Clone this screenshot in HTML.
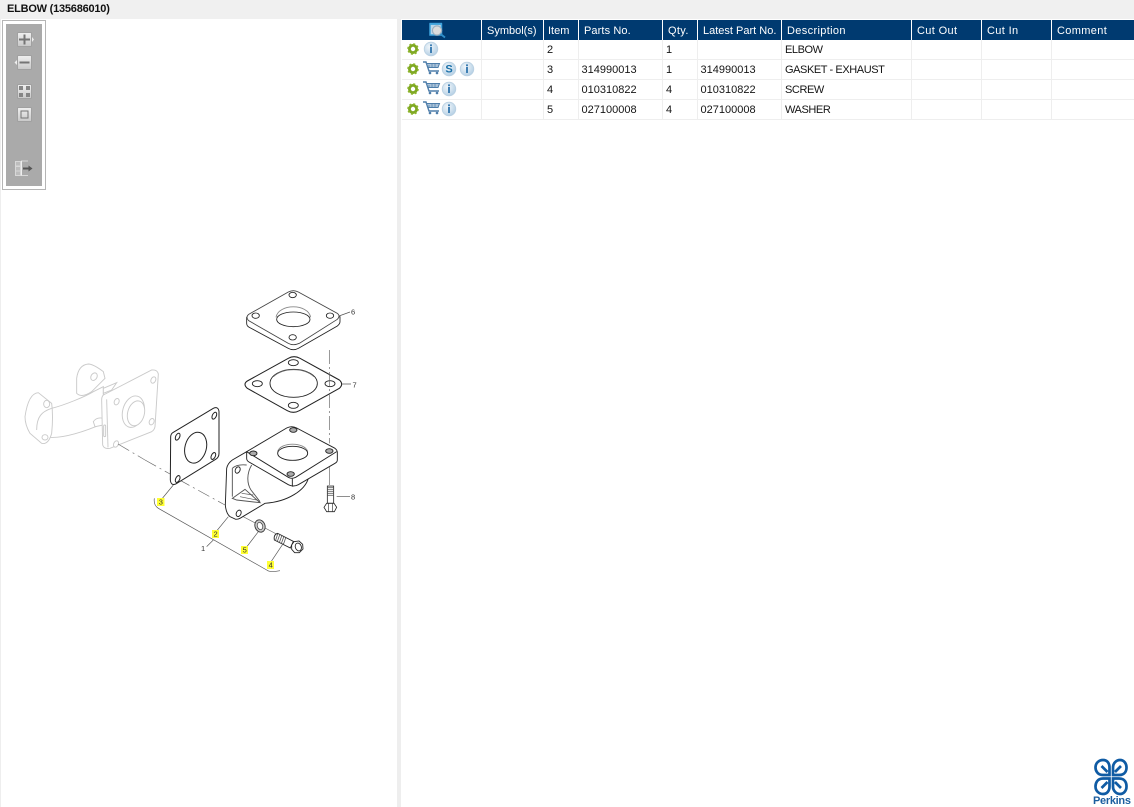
<!DOCTYPE html>
<html><head><meta charset="utf-8"><title>ELBOW (135686010)</title>
<style>
html,body{margin:0;padding:0;background:#fff;width:1134px;height:807px;overflow:hidden}
body{position:relative;font-family:"Liberation Sans",sans-serif;font-size:11px;color:#111}
#top{position:absolute;left:0;top:0;width:1134px;height:19px;background:#f0f0f0}
#title{position:absolute;left:7px;top:2px;font-weight:bold;font-size:11px;letter-spacing:-.22px;line-height:14px;color:#111}
#split{position:absolute;left:397px;top:19px;width:4px;height:788px;background:#eeeeee}
#edge{position:absolute;left:0;top:19px;width:1px;height:788px;background:#eee}
#tb{position:absolute;left:2px;top:20px;width:42px;height:168px;border:1px solid #b5b5b5;background:#fff}
#tb i{position:absolute;left:3px;top:3px;width:36px;height:162px;background:#aaa}
table{position:absolute;left:402px;top:20px;border-collapse:separate;border-spacing:0;table-layout:fixed;width:732px}
th{background:#003a70;color:#fff;font-weight:normal;text-align:left;height:20px;padding:1px 0 0 5px;box-sizing:border-box;border-right:1px solid #fff;font-size:11px;letter-spacing:.35px;white-space:nowrap;overflow:hidden}
td{height:20px;box-sizing:border-box;padding:1px 0 0 3px;border-right:1px solid #eee;border-bottom:1px solid #eee;font-size:11px;white-space:nowrap;overflow:hidden;color:#151515}
td.d{letter-spacing:-.42px}
td.n{padding-left:2.5px}
td:last-child,th:last-child{border-right:0}
svg{position:absolute;left:0;top:0}
</style></head><body>
<div id="top"></div><div id="title">ELBOW (135686010)</div>
<div id="edge"></div><div id="split"></div>
<div id="tb"><i></i></div>
<table>
<colgroup><col style="width:80px"><col style="width:62px"><col style="width:35px"><col style="width:84px"><col style="width:35px"><col style="width:84px"><col style="width:130px"><col style="width:70px"><col style="width:70px"><col style="width:82px"></colgroup>
<tr><th></th><th style="letter-spacing:0">Symbol(s)</th><th style="letter-spacing:0;padding-left:4px">Item</th><th style="letter-spacing:.1px">Parts No.</th><th>Qty.</th><th style="letter-spacing:0">Latest Part No.</th><th>Description</th><th>Cut Out</th><th>Cut In</th><th>Comment</th></tr>
<tr><td></td><td></td><td>2</td><td></td><td>1</td><td></td><td class="d">ELBOW</td><td></td><td></td><td></td></tr>
<tr><td></td><td></td><td>3</td><td class="n">314990013</td><td>1</td><td class="n">314990013</td><td class="d">GASKET - EXHAUST</td><td></td><td></td><td></td></tr>
<tr><td></td><td></td><td>4</td><td class="n">010310822</td><td>4</td><td class="n">010310822</td><td class="d">SCREW</td><td></td><td></td><td></td></tr>
<tr><td></td><td></td><td>5</td><td class="n">027100008</td><td>4</td><td class="n">027100008</td><td class="d">WASHER</td><td></td><td></td><td></td></tr>
</table>

<svg width="1134" height="807" viewBox="0 0 1134 807" fill="none">
<defs>
<radialGradient id="ig" cx=".4" cy=".35" r=".8"><stop offset="0" stop-color="#f2f7fb"/><stop offset="1" stop-color="#a9c8e0"/></radialGradient>
<linearGradient id="bg" x1="0" y1="0" x2="0" y2="1"><stop offset="0" stop-color="#f0f0f0"/><stop offset="1" stop-color="#c8c8c8"/></linearGradient>
<g id="gear"><circle r="3.6" fill="none" stroke="#7fa823" stroke-width="2.8"/><circle r="5" fill="none" stroke="#8db52c" stroke-width="1.6" stroke-dasharray="2 1.93"/></g>
<g id="info"><circle r="6.8" fill="url(#ig)" stroke="#b9d0e2" stroke-width=".8"/><rect x="-1" y="-2" width="2" height="6" fill="#3f7fb3"/><rect x="-1" y="-4.6" width="2" height="1.8" fill="#3f7fb3"/></g>
<g id="cart" stroke="#4f7eaa" fill="none"><path d="M-8-6h3l3 9h10" stroke-width="1.4"/><path d="M-4.500-4.500H8.500L7-.5H-3z" fill="#a9c2d9" stroke-width="1"/><path d="M-2-3V0M1-4V0M4-4V0" stroke-width=".7"/><circle cx="-1" cy="5" r="1.300" fill="#4f7eaa" stroke="none"/><circle cx="6" cy="5" r="1.300" fill="#4f7eaa" stroke="none"/></g>
</defs>

<!-- toolbar buttons -->
<g stroke="#a0a0a0" fill="url(#bg)">
<rect x="17.500" y="32.500" width="14" height="14" rx="1"/><rect x="17.500" y="55.500" width="14" height="14" rx="1"/><rect x="17.500" y="84.500" width="14" height="14" rx="1"/><rect x="17.500" y="107.500" width="14" height="14" rx="1"/>
</g>
<path d="M32 37l2 2.500-2 2.500z" fill="#eee"/><path d="M17 60l-2.500 2.500 2.500 2.500z" fill="#eee"/>
<path d="M19 39.500h11M24.500 34.500v10" stroke="#757575" stroke-width="2"/>
<path d="M19.500 62.500h10" stroke="#757575" stroke-width="2"/>
<g fill="#858585"><rect x="19" y="86" width="4" height="4"/><rect x="26" y="86" width="4" height="4"/><rect x="19" y="93" width="4" height="4"/><rect x="26" y="93" width="4" height="4"/></g>
<rect x="21" y="111" width="7" height="7" stroke="#757575" stroke-width="1"/>
<g stroke="#d8d8d8" fill="#bdbdbd"><rect x="15.500" y="161.500" width="5" height="4.500"/><rect x="15.500" y="166.500" width="5" height="4.500"/><rect x="15.500" y="171" width="5" height="4.500"/></g>
<path d="M21 161h7M21 175.500h7" stroke="#d8d8d8"/><path d="M21.500 161v14.500" stroke="#eee"/>
<path d="M23 168.500h6" stroke="#555" stroke-width="2"/><path d="M28.500 165.500l4 3-4 3z" fill="#555"/>

<!-- header search icon -->
<rect x="430" y="24" width="11.500" height="11" fill="#bcd9ec" stroke="#3fa3dc" stroke-width="1.500"/>
<path d="M429.500 23.800h12.500" stroke="#3fa3dc" stroke-width="2"/>
<circle cx="437" cy="30.500" r="4.600" fill="#dcdcdc" stroke="#9fb0bf" stroke-width="1.200"/>
<path d="M440.500 34l4.500 3.500" stroke="#2f8fca" stroke-width="1.800"/>

<!-- row icons -->
<use href="#gear" x="413" y="49"/><use href="#info" x="431" y="49"/>
<use href="#gear" x="413" y="69"/><use href="#cart" x="431" y="68"/>
<circle cx="449" cy="69" r="6.800" fill="url(#ig)" stroke="#b9d0e2" stroke-width=".8"/>
<text x="449" y="72.700" text-anchor="middle" font-family="Liberation Sans" font-weight="bold" font-size="11" fill="#1a70a8">S</text>
<use href="#info" x="467" y="69"/>
<use href="#gear" x="413" y="89"/><use href="#cart" x="431" y="88"/><use href="#info" x="449" y="89"/>
<use href="#gear" x="413" y="109"/><use href="#cart" x="431" y="108"/><use href="#info" x="449" y="109"/>

<!-- faded elbow, traced in 3x coordinates -->
<g transform="translate(10 350) scale(.33333)" stroke="#cacaca" stroke-width="2.800" fill="#fff">
<path d="M200 85Q205 45 235 42Q250 42 280 65L285 85L245 125Q215 145 200 130Z"/>
<ellipse cx="252" cy="80" rx="9" ry="12" transform="rotate(30 252 80)"/>
<path d="M125 175C165 165 225 140 250 125L280 110V220C225 245 160 265 120 262L80 240C80 200 95 185 125 175Z"/>
<path d="M45 200Q55 130 85 128L125 160Q130 200 125 250Q115 285 95 280L60 250Q45 225 45 200Z"/>
<ellipse cx="110" cy="162" rx="9" ry="11"/><ellipse cx="105" cy="262" rx="9" ry="8"/>
<path d="M80 240C80 200 95 185 125 175" fill="none"/>
<path d="M250 215Q260 200 280 205V225L255 230Z"/>
<path d="M280 115L320 98L305 120L280 130Z"/>
<path d="M280 135L425 60Q442 58 445 72L435 230Q433 240 425 245L300 295Q282 298 278 285L275 150Q275 140 280 135Z"/>
<path d="M290 148L294 292" fill="none"/>
<ellipse cx="370" cy="185" rx="32" ry="48" transform="rotate(15 370 185)"/>
<ellipse cx="378" cy="190" rx="25" ry="38" transform="rotate(15 378 190)"/>
<ellipse cx="430" cy="90" rx="7" ry="10" transform="rotate(25 430 90)"/><ellipse cx="320" cy="155" rx="7" ry="10" transform="rotate(25 320 155)"/><ellipse cx="425" cy="215" rx="7" ry="10" transform="rotate(25 425 215)"/><ellipse cx="318" cy="282" rx="7" ry="10" transform="rotate(25 318 282)"/>
<rect x="281" y="225" width="6" height="35" rx="3"/>
</g>

<!-- plates 6 and 7 -->
<g transform="translate(220 280) scale(.33333)" stroke="#222" stroke-width="2.600" fill="#fff">
<path d="M80 112V130Q80 138 88 142L205 205Q220 213 235 205L352 138Q360 132 360 125V110Z"/>
<path d="M86 103L205 36Q220 28 235 36L352 100Q362 108 352 118L238 190Q220 198 205 190L86 122Q76 112 86 103Z" stroke="#444"/>
<path d="M168 112C175 70 265 70 272 112" stroke="#888"/>
<ellipse cx="220" cy="118" rx="50" ry="22"/>
<ellipse cx="218" cy="45" rx="11" ry="8"/><ellipse cx="107" cy="107" rx="11" ry="8"/><ellipse cx="330" cy="107" rx="11" ry="8"/><ellipse cx="218" cy="172" rx="11" ry="8"/>
<path d="M82 303L205 235Q222 225 240 235L358 300Q372 312 358 325L238 392Q220 402 202 392L82 325Q68 312 82 303Z" stroke-width="3.200"/>
<ellipse cx="221" cy="310" rx="71" ry="42"/>
<path d="M160 290C190 262 252 262 282 290" fill="none" stroke="#666"/>
<ellipse cx="220" cy="248" rx="15" ry="9"/><ellipse cx="112" cy="311" rx="15" ry="9"/><ellipse cx="330" cy="311" rx="15" ry="9"/><ellipse cx="220" cy="376" rx="15" ry="9"/>
</g>

<!-- dashed centre line from the faded flange to the gasket -->
<path d="M118 444L145 460" stroke="#777" stroke-width=".7" stroke-dasharray="13 4 2 4"/>

<!-- assembly, traced in 3x coordinates -->
<g transform="translate(145 400) scale(.33333)" fill="none">
<g stroke="#666" stroke-width="2">
<path d="M0 180L75 222" stroke-dasharray="38 12 6 12"/>
<path d="M100 238L240 315" stroke-dasharray="38 12 6 12"/>
<path d="M285 345L400 405"/>
<path d="M553 -150V130" stroke-dasharray="42 9 6 9"/><path d="M553 160V255"/>
</g>
<g stroke="#222" stroke-width="3" fill="#fff">
<path d="M85 97L205 25Q220 18 222 35L222 160Q222 172 212 178L92 252Q78 258 76 240L77 110Q78 100 85 97Z"/>
<ellipse cx="152" cy="143" rx="32" ry="47" transform="rotate(15 152 143)"/>
<ellipse cx="208" cy="47" rx="6" ry="11" transform="rotate(25 208 47)"/><ellipse cx="98" cy="110" rx="6" ry="11" transform="rotate(25 98 110)"/><ellipse cx="205" cy="168" rx="6" ry="11" transform="rotate(25 205 168)"/><ellipse cx="98" cy="237" rx="6" ry="11" transform="rotate(25 98 237)"/>
</g>
<g stroke="#222" stroke-width="2.800" fill="#fff">
<path d="M305 155L262 180Q248 190 245 205L241 315Q243 340 255 350L272 358Q280 358 285 355L360 310C430 305 480 270 490 235L305 155Z"/>
<path d="M262 205V290M262 205Q275 192 305 195" fill="none" stroke="#555"/>
<path d="M262 295L300 268L345 308L275 300Z" stroke="#555"/>
<path d="M320 195C305 220 305 250 318 270L345 305" fill="none" stroke="#555"/>
<path d="M290 280L325 285M285 290L335 300" stroke="#555" stroke-width="2"/>
<ellipse cx="278" cy="210" rx="7" ry="10" transform="rotate(25 278 210)"/>
<ellipse cx="281" cy="340" rx="7" ry="10" transform="rotate(25 281 340)"/>
<path d="M305 155L425 84Q440 76 455 84L570 145Q577 150 577 158V180Q577 186 570 190L460 254Q445 262 430 254L312 186Q305 182 305 175Z"/>
<path d="M305 155L430 232Q440 238 452 232L575 155" fill="none"/>
<path d="M442 236V260" fill="none"/>
<path d="M398 155C405 125 480 125 488 155" stroke="#888"/>
<ellipse cx="443" cy="160" rx="45" ry="21"/>
<ellipse cx="445" cy="90" rx="11" ry="7" fill="#aaa"/><ellipse cx="325" cy="160" rx="11" ry="7" fill="#aaa"/><ellipse cx="553" cy="153" rx="11" ry="7" fill="#aaa"/><ellipse cx="437" cy="222" rx="11" ry="7" fill="#aaa"/>
</g>
<!-- bolt 8 -->
<g stroke="#222" stroke-width="2.400" fill="#fff">
<path d="M547 258H566V310H547Z"/>
<path d="M548 262H565M548 268H565M548 274H565M548 280H565M548 286H565" stroke="#666"/>
<path d="M537 322L545 310H567L575 322L568 335H545Z"/>
<path d="M550 311V334M563 311V334" stroke-width="1.800"/>
</g>
<!-- washer 5 -->
<ellipse cx="345" cy="378" rx="15" ry="19" fill="#c8c8c8" stroke="#333" stroke-width="2.600" transform="rotate(-20 345 378)"/>
<ellipse cx="345" cy="378" rx="8" ry="11" fill="#fff" stroke="#333" stroke-width="2" transform="rotate(-20 345 378)"/>
<!-- bolt 4 -->
<g stroke="#222" stroke-width="2.600" fill="#fff">
<path d="M398 400L445 424L436 444L388 420Q385 404 398 400Z"/>
<path d="M398 402L392 420M404 405L397 424M410 408L403 428M416 411L409 431M422 414L415 434" stroke="#555" stroke-width="2.400"/>
<path d="M440 435L447 425L462 423L473 433L474 447L463 458L449 458L440 448Z"/>
<ellipse cx="460" cy="441" rx="9" ry="12" transform="rotate(-20 460 441)"/>
</g>
<!-- callouts -->
<g stroke="#555" stroke-width="2">
<path d="M85 255L48 300"/><path d="M250 350L205 405"/><path d="M185 440L205 420"/>
<path d="M340 395L298 450"/><path d="M415 430L375 490"/>
<path d="M28 295Q25 315 40 325L365 510Q375 518 405 512"/>
<path d="M575 290H615"/>
</g>
</g>
<path d="M339 316l11-4M342 384h9" stroke="#555" stroke-width=".7"/>
<g fill="#ffff33"><rect x="157" y="498" width="7.500" height="8"/><rect x="212" y="530" width="7" height="8"/><rect x="241" y="546" width="7" height="8"/><rect x="267" y="561" width="7" height="8"/></g>
<g font-family="Liberation Sans" font-size="7.500" fill="#333">
<text x="158.800" y="504.700">3</text><text x="213.500" y="536.700">2</text><text x="242.600" y="552.700">5</text><text x="268.600" y="567.700">4</text>
<text x="201" y="551">1</text><text x="351" y="314.700">6</text><text x="352.500" y="387.700">7</text><text x="351" y="499.500">8</text>
</g>

<!-- Perkins logo -->
<g stroke="#0f5ba4" stroke-width="2.700" fill="none">
<path d="M1103 775c-6 0-7.500-5-7.500-7.500 0-4.500 3.500-7.500 7.500-7.500s6.500 3 6.500 7.500v7.500zM1101.500 766l6 6"/>
<path d="M1113 775v-7.500c0-4.500 3.500-7.500 7-7.500s6.500 3 6.500 7.500c0 2.500-1 7.500-7.500 7.500zM1121 766l-6 6"/>
<path d="M1103 778.500c-6 0-7.500 5-7.500 8 0 4.500 3.500 7.500 7.500 7.500s6.500-3 6.500-7.500v-8zM1101.500 788l6-6"/>
<path d="M1113 778.500v8c0 4.500 3.500 7.500 7 7.500s6.500-3 6.500-7.500c0-3-1-8-7.500-8zM1121 788l-6-6"/>
</g>
<text x="1093" y="804" font-family="Liberation Sans" font-weight="bold" font-size="11" letter-spacing="-.3" fill="#1b5e9f">Perkins</text>
</svg>
</body></html>
